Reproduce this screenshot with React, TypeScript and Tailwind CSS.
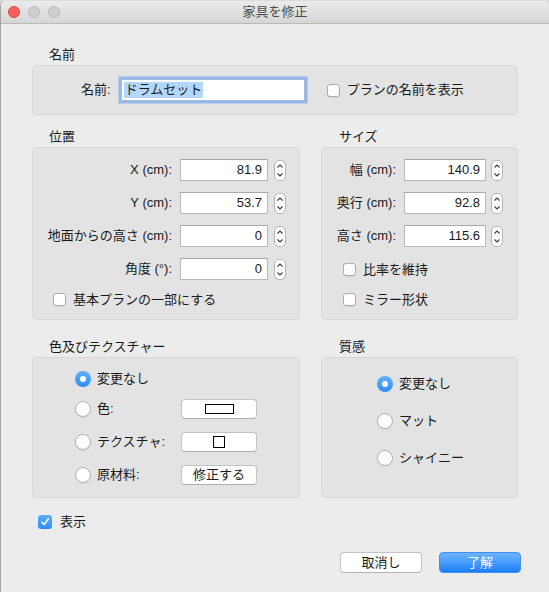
import React from "react";

const font = { fontFamily: '"Liberation Sans", "Noto Sans CJK JP", sans-serif' };

function Stepper() {
  return (
    <svg width="12" height="21" viewBox="0 0 12 21" className="shrink-0">
      <rect x="0.5" y="0.5" width="11" height="20" rx="4.5" fill="#fff" stroke="#b4b4b4" />
      <path d="M3.5 7.5 L6 5 L8.5 7.5" fill="none" stroke="#3a3a3a" strokeWidth="1.1" />
      <path d="M3.5 13.5 L6 16 L8.5 13.5" fill="none" stroke="#3a3a3a" strokeWidth="1.1" />
    </svg>
  );
}

function Checkbox() {
  return <div className="w-[13px] h-[13px] shrink-0 rounded-[3px] border border-[#acacac] bg-white shadow-[0_1px_1px_rgba(0,0,0,0.06)]" />;
}

function CheckedBox() {
  return (
    <div className="w-[14px] h-[14px] shrink-0 rounded-[3px] bg-linear-to-b from-[#5fadfb] to-[#2d8cf8] flex items-center justify-center">
      <svg width="10" height="10" viewBox="0 0 10 10">
        <path d="M2 5.3 L4.2 7.6 L8.2 2" fill="none" stroke="#fff" strokeWidth="1.6" strokeLinecap="round" strokeLinejoin="round" />
      </svg>
    </div>
  );
}

function Radio({ on }: { on?: boolean }) {
  if (on) {
    return (
      <div className="w-[16px] h-[16px] shrink-0 rounded-full bg-linear-to-b from-[#62b0fb] to-[#2e8df8] flex items-center justify-center">
        <div className="w-[6px] h-[6px] rounded-full bg-white" />
      </div>
    );
  }
  return <div className="w-[16px] h-[16px] shrink-0 rounded-full border border-[#b2b2b2] bg-white shadow-[0_1px_1px_rgba(0,0,0,0.06)]" />;
}

function NumberRow({ label, value, labelW, inputW, stepGap }: { label: string; value: string; labelW: string; inputW: string; stepGap: string }) {
  return (
    <div className="flex items-center h-[22px]">
      <div className={`${labelW} text-right whitespace-nowrap`}>{label}</div>
      <div className={`${inputW} ml-2 h-[22px] bg-white border border-[#bababa] border-t-[#a9a9a9] flex items-center justify-end pr-[5px]`}>
        {value}
      </div>
      <div className={stepGap}>
        <Stepper />
      </div>
    </div>
  );
}

export default function App() {
  return (
    <div style={font} className="w-[549px] h-[592px] bg-[#dcdcdc] pt-[1px] text-[13px] leading-[16px] text-[#1a1a1a] overflow-hidden">
      <div className="h-[591px] bg-[#ececec] rounded-t-[5px] border-l border-[#a3a3a3] flex flex-col">
        {/* Title bar */}
        <div className="relative h-[23px] shrink-0 rounded-t-[5px] bg-linear-to-b from-[#ebebeb] to-[#d6d6d6] border-b border-[#b9b9b9] flex items-center pl-[7px]">
          <div className="flex gap-[8px]">
            <div className="w-[12px] h-[12px] rounded-full bg-[#fc605c] border border-[#e0443e]" />
            <div className="w-[12px] h-[12px] rounded-full bg-[#cfcfcf] border border-[#bcbcbc]" />
            <div className="w-[12px] h-[12px] rounded-full bg-[#cfcfcf] border border-[#bcbcbc]" />
          </div>
          <div className="absolute inset-0 flex items-center justify-center text-[#4b4b4b]">家具を修正</div>
        </div>

        <div className="flex flex-col pl-[31px] pr-[31px]">
          {/* Name */}
          <div className="mt-[23px] h-[16px] ml-[17px]">名前</div>
          <div className="mt-[2px] h-[50px] rounded-[4px] bg-[#e3e3e3] border border-[#d8d8d8] flex items-center pl-[48px]">
            <div className="whitespace-nowrap">名前:</div>
            <div className="ml-[10px] w-[184px] h-[22px] bg-white border border-[#a6b9d6] shadow-[0_0_0_2.5px_rgba(120,170,240,0.75)] flex items-center pl-[2px]">
              <span className="bg-[#b3d7ff] px-[1px]">ドラムセット</span>
            </div>
            <div className="ml-[22px]">
              <Checkbox />
            </div>
            <div className="ml-[7px] whitespace-nowrap">プランの名前を表示</div>
          </div>

          {/* Position / Size */}
          <div className="flex gap-[21px]">
            <div className="w-[268px] flex flex-col">
              <div className="mt-[14px] h-[16px] ml-[17px]">位置</div>
              <div className="mt-[2px] h-[173px] rounded-[4px] bg-[#e3e3e3] border border-[#d8d8d8] flex flex-col pt-[11px] gap-[11px]">
                <NumberRow label="X (cm):" value="81.9" labelW="w-[139px]" inputW="w-[88px]" stepGap="ml-[6px]" />
                <NumberRow label="Y (cm):" value="53.7" labelW="w-[139px]" inputW="w-[88px]" stepGap="ml-[6px]" />
                <NumberRow label="地面からの高さ (cm):" value="0" labelW="w-[139px]" inputW="w-[88px]" stepGap="ml-[6px]" />
                <NumberRow label="角度 (°):" value="0" labelW="w-[139px]" inputW="w-[88px]" stepGap="ml-[6px]" />
                <div className="flex items-center h-[13px] mt-[2px] pl-[20px]">
                  <Checkbox />
                  <div className="ml-[7px] whitespace-nowrap">基本プランの一部にする</div>
                </div>
              </div>
            </div>
            <div className="w-[197px] flex flex-col">
              <div className="mt-[14px] h-[16px] ml-[18px]">サイズ</div>
              <div className="mt-[2px] h-[173px] rounded-[4px] bg-[#e3e3e3] border border-[#d8d8d8] flex flex-col pt-[11px] gap-[11px]">
                <NumberRow label="幅 (cm):" value="140.9" labelW="w-[74px]" inputW="w-[82px]" stepGap="ml-[5px]" />
                <NumberRow label="奥行 (cm):" value="92.8" labelW="w-[74px]" inputW="w-[82px]" stepGap="ml-[5px]" />
                <NumberRow label="高さ (cm):" value="115.6" labelW="w-[74px]" inputW="w-[82px]" stepGap="ml-[5px]" />
                <div className="flex items-center h-[13px] mt-[5px] pl-[21px]">
                  <Checkbox />
                  <div className="ml-[7px] whitespace-nowrap">比率を維持</div>
                </div>
                <div className="flex items-center h-[13px] mt-[6px] pl-[21px]">
                  <Checkbox />
                  <div className="ml-[7px] whitespace-nowrap">ミラー形状</div>
                </div>
              </div>
            </div>
          </div>

          {/* Color / Shininess */}
          <div className="flex gap-[21px]">
            <div className="w-[268px] flex flex-col">
              <div className="mt-[19px] h-[16px] ml-[17px]">色及びテクスチャー</div>
              <div className="mt-[2px] h-[141px] rounded-[4px] bg-[#e3e3e3] border border-[#d8d8d8] flex flex-col pt-[11px] pl-[42px]">
                <div className="flex items-center h-[20px]">
                  <Radio on />
                  <div className="ml-[6px]">変更なし</div>
                </div>
                <div className="flex items-center h-[20px] mt-[10px]">
                  <Radio />
                  <div className="ml-[6px] w-[84px]">色:</div>
                  <div className="w-[76px] h-[20px] rounded-[4px] bg-white border border-[#c3c3c3] border-b-[#afafaf] flex items-center justify-center">
                    <div className="w-[29px] h-[10px] border border-black bg-white" />
                  </div>
                </div>
                <div className="flex items-center h-[20px] mt-[13px]">
                  <Radio />
                  <div className="ml-[6px] w-[84px] whitespace-nowrap">テクスチャ:</div>
                  <div className="w-[76px] h-[20px] rounded-[4px] bg-white border border-[#c3c3c3] border-b-[#afafaf] flex items-center justify-center">
                    <div className="w-[12px] h-[12px] border border-black bg-white" />
                  </div>
                </div>
                <div className="flex items-center h-[20px] mt-[13px]">
                  <Radio />
                  <div className="ml-[6px] w-[84px]">原材料:</div>
                  <div className="w-[76px] h-[20px] rounded-[4px] bg-white border border-[#c3c3c3] border-b-[#afafaf] flex items-center justify-center">
                    修正する
                  </div>
                </div>
              </div>
            </div>
            <div className="w-[197px] flex flex-col">
              <div className="mt-[19px] h-[16px] ml-[18px]">質感</div>
              <div className="mt-[2px] h-[141px] rounded-[4px] bg-[#e3e3e3] border border-[#d8d8d8] flex flex-col pt-[16px] pl-[55px] gap-[17px]">
                <div className="flex items-center h-[20px]">
                  <Radio on />
                  <div className="ml-[6px]">変更なし</div>
                </div>
                <div className="flex items-center h-[20px]">
                  <Radio />
                  <div className="ml-[6px]">マット</div>
                </div>
                <div className="flex items-center h-[20px]">
                  <Radio />
                  <div className="ml-[6px]">シャイニー</div>
                </div>
              </div>
            </div>
          </div>

          {/* Visible */}
          <div className="mt-[17px] h-[14px] flex items-center ml-[6px]">
            <CheckedBox />
            <div className="ml-[8px]">表示</div>
          </div>

          {/* Buttons */}
          <div className="mt-[23px] flex ml-[308px] -mr-[3px] gap-[17px]">
            <div className="w-[82px] shrink-0 h-[21px] rounded-[4px] bg-white border border-[#c5c5c5] border-b-[#b0b0b0] flex items-center justify-center">
              取消し
            </div>
            <div className="w-[82px] shrink-0 h-[21px] rounded-[4px] bg-linear-to-b from-[#6cb4fb] to-[#167ffa] border border-[#3f8ff5] text-white flex items-center justify-center">
              了解
            </div>
          </div>
        </div>
      </div>
    </div>
  );
}
